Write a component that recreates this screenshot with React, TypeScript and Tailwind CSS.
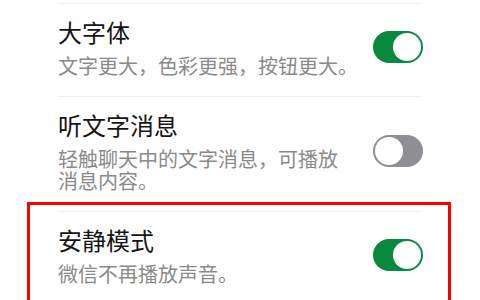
const rows: { title: string; lines: string[]; on: boolean }[] = [
  { title: "大字体", lines: ["文字更大，色彩更强，按钮更大。"], on: true },
  {
    title: "听文字消息",
    lines: ["轻触聊天中的文字消息，可播放", "消息内容。"],
    on: false,
  },
  { title: "安静模式", lines: ["微信不再播放声音。"], on: true },
];

function Toggle({ on }: { on: boolean }) {
  return (
    <div
      className={
        on
          ? "flex h-[32px] w-[50px] shrink-0 items-center justify-end rounded-full bg-[#088a3d] p-[2px]"
          : "flex h-[32px] w-[50px] shrink-0 items-center justify-start rounded-full bg-[#8e8e93] p-[2px]"
      }
    >
      <div className="h-[28px] w-[28px] rounded-full bg-white" />
    </div>
  );
}

function Row({
  title,
  lines,
  on,
}: {
  title: string;
  lines: string[];
  on: boolean;
}) {
  return (
    <div className="flex items-center justify-between border-t border-[#efefef] pt-[13px] pb-[19px]">
      <div className="flex flex-col gap-[8px]">
        <div className="text-[24px] leading-[30px] text-[#141414]">{title}</div>
        <p className="whitespace-nowrap text-[20px] leading-[22px] text-[#8a8a8a]">
          {lines.map((l, i) => (
            <span key={l}>
              {i > 0 && <br />}
              {l}
            </span>
          ))}
        </p>
      </div>
      <div className="mr-[-2px]">
        <Toggle on={on} />
      </div>
    </div>
  );
}

export default function App() {
  return (
    <div
      className="h-[300px] w-[480px] overflow-hidden bg-white pt-[3px]"
      style={{ fontFamily: '"Noto Sans CJK SC", "Noto Sans", sans-serif' }}
    >
      <div className="mx-[58px] mr-[59px]">
        <Row {...rows[0]} />
        <Row {...rows[1]} />
        <div className="relative">
          {/* highlight frame drawn over the row */}
          <div
            aria-hidden
            className="pointer-events-none absolute -top-[9px] -right-[30px] -bottom-[40px] -left-[31px] border-[3px] border-[#ff0000]"
          />
          <Row {...rows[2]} />
        </div>
      </div>
    </div>
  );
}
